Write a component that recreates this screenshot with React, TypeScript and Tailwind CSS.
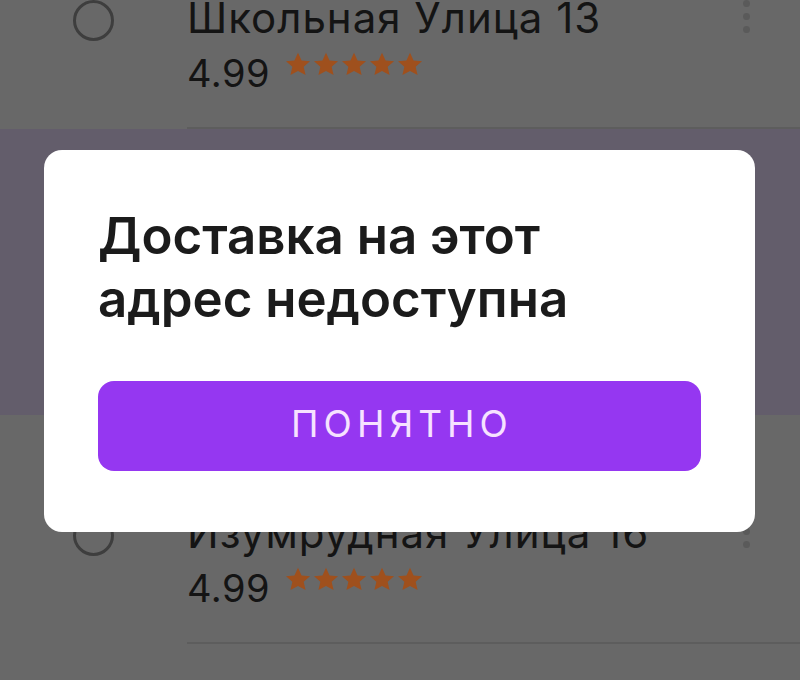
import React from "react";

const FONT = { fontFamily: "Inter, 'Noto Sans', sans-serif" };

function Star() {
  return (
    <svg width="26" height="25" viewBox="0 0 24 23" className="shrink-0">
      <path
        d="M12 0.6l3.3 7.1 7.8.7-5.9 5.2 1.8 7.7L12 17.4l-7 3.9 1.8-7.7-5.9-5.2 7.8-.7z"
        fill="#9f501d"
      />
    </svg>
  );
}

function Kebab() {
  return (
    <div className="flex flex-col items-center gap-[6px]">
      <span className="w-[7px] h-[7px] rounded-full bg-[#5a5a5a]" />
      <span className="w-[7px] h-[7px] rounded-full bg-[#5a5a5a]" />
      <span className="w-[7px] h-[7px] rounded-full bg-[#5a5a5a]" />
    </div>
  );
}

function AddressRow({ title, rating }: { title: string; rating: string }) {
  return (
    <div className="relative flex h-[229px] shrink-0">
      <div className="w-[187px] shrink-0 pl-[73px] pt-[100px]">
        <div className="w-[41px] h-[41px] rounded-full border-[3px] border-[#3e3e3e]" />
      </div>
      <div className="flex-1 flex flex-col pt-[100px] border-b-2 border-[#5d5d5d]">
        <div className="flex items-start justify-between pr-[50px]">
          <div className="text-[42px] leading-[36px] text-[#141414] tracking-[1px]">
            {title}
          </div>
          <div className="pt-[0px]">
            <Kebab />
          </div>
        </div>
        <div className="mt-[14px] flex items-start gap-[15px]">
          <span className="text-[38px] leading-[46px] text-[#141414] tracking-[0.5px]">
            {rating}
          </span>
          <div className="mt-[2px] flex gap-[2px]">
            <Star />
            <Star />
            <Star />
            <Star />
            <Star />
          </div>
        </div>
      </div>
    </div>
  );
}

export default function App() {
  return (
    <div
      className="relative w-[800px] h-[680px] overflow-hidden bg-[#686868]"
      style={FONT}
    >
      <div className="flex flex-col mt-[-100px]">
        <AddressRow title="Школьная Улица 13" rating="4.99" />
        <div className="h-[286px] shrink-0 bg-[#635d6b]" />
        <AddressRow title="Изумрудная Улица 16" rating="4.99" />
      </div>

      <div className="absolute left-[44px] top-[150px] w-[711px] h-[382px] rounded-[18px] bg-white px-[54px] pt-[54px]">
        <h2 className="text-[51px] leading-[63px] font-semibold text-[#1b1b1b]">
          Доставка на этот
          <br />
          адрес недоступна
        </h2>
        <button className="mt-[51px] w-full h-[90px] rounded-[16px] bg-[#9537f1] text-[#f6e2ff] text-[37px] tracking-[5px] pl-[5px] pb-[5px] flex items-center justify-center">
          ПОНЯТНО
        </button>
      </div>
    </div>
  );
}
